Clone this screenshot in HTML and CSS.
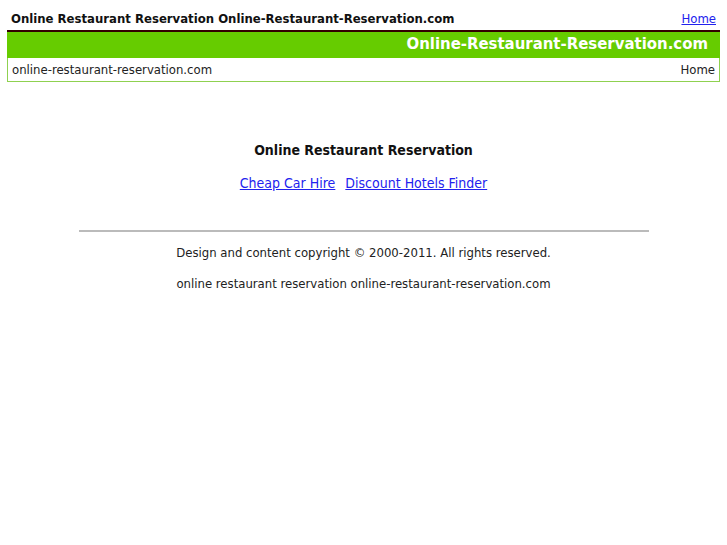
FILE: index.html
```html
<!DOCTYPE html>
<html lang="en">
<head>
    <meta charset="UTF-8">
    <title>Online Restaurant Reservation</title>
    <link rel="stylesheet" href="styles.css">
</head>
<body>
    <div class="top-bar">
        <h1>Online Restaurant Reservation Online-Restaurant-Reservation.com</h1>
        <a href="#">Home</a>
    </div>
    <div class="header">
        <div class="banner">Online-Restaurant-Reservation.com</div>
        <div class="nav">
            <span>online-restaurant-reservation.com</span>
            <span>Home</span>
        </div>
    </div>

    <div class="content">
        <h2>Online Restaurant Reservation</h2>
        <p class="links">
            <a href="#">Cheap Car Hire</a>
            <a href="#">Discount Hotels Finder</a>
        </p>
    </div>

    <div class="footer">
        <hr>
        <p>Design and content copyright &copy; 2000-2011. All rights reserved.</p>
        <p>online restaurant reservation online-restaurant-reservation.com</p>
    </div>
</body>
</html>
```

FILE: styles.css
```css
body {
    font-family: "DejaVu Sans Condensed", "DejaVu Sans", sans-serif;
    margin: 0;
    padding: 0 7px;
    color: #222;
    background: white;
}
a {
    color: #2222ee;
}
.top-bar {
    display: flex;
    justify-content: space-between;
    align-items: baseline;
    padding: 11px 4px 0 4px;
    height: 19px;
    border-bottom: 2px solid #330000;
}
.top-bar h1 {
    font-size: 13px;
    font-weight: bold;
    margin: 0;
    color: #111;
}
.top-bar a {
    font-size: 13px;
}
.banner {
    background: #66cc00;
    color: white;
    font-weight: bold;
    font-size: 16.6px;
    text-align: right;
    height: 26px;
    line-height: 24px;
    padding-right: 12px;
}
.nav {
    display: flex;
    justify-content: space-between;
    align-items: center;
    border: 1px solid #8fd150;
    border-top: none;
    height: 23px;
    padding: 0 4px;
    font-size: 13px;
    color: #222;
}
.content {
    text-align: center;
    padding-top: 60px;
}
.content h2 {
    font-size: 14px;
    margin: 0;
    color: #111;
}
.links {
    font-size: 14px;
    margin: 17px 0 0 0;
}
.links a {
    margin: 0 3px;
}
.footer {
    text-align: center;
    font-size: 13px;
    padding-top: 39px;
}
.footer hr {
    width: 570px;
    margin: 0 auto;
    border: none;
    border-top: 2px solid #bbb;
}
.footer p {
    margin: 13px 0 0 0;
}
.footer p + p {
    margin-top: 16px;
}
```
